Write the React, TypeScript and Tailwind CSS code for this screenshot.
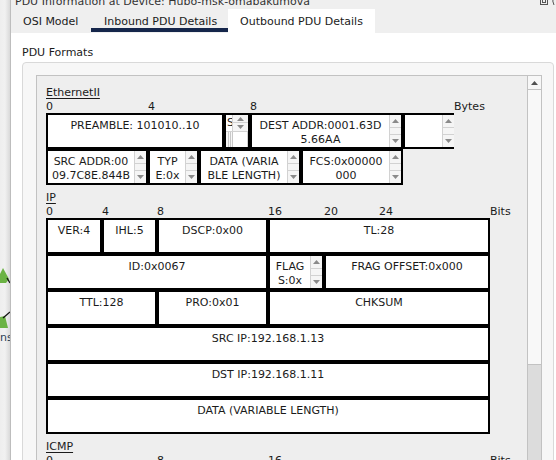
import React from "react";
import clsx from "clsx";

const Up = ({ fill = "#8a8a8a" }: { fill?: string }) => (
  <svg width="7" height="4" viewBox="0 0 7 4">
    <polygon points="0,4 3.5,0 7,4" fill={fill} />
  </svg>
);

const Down = ({ fill = "#8a8a8a" }: { fill?: string }) => (
  <svg width="7" height="4" viewBox="0 0 7 4">
    <polygon points="0,0 7,0 3.5,4" fill={fill} />
  </svg>
);

const Spin = () => (
  <div className="w-[12px] shrink-0 flex flex-col border-l border-[#d2d2d2] bg-[#f5f5f5]">
    <div className="h-[13px] flex items-center justify-center border-b border-[#d2d2d2]">
      <Up />
    </div>
    <div className="flex-1" />
    <div className="h-[13px] flex items-center justify-center border-t border-[#d2d2d2]">
      <Down />
    </div>
  </div>
);

interface FieldProps {
  w: string;
  lines?: string[];
  spin?: boolean;
  noRight?: boolean;
}

const Field = ({ w, lines = [], spin = false, noRight = false }: FieldProps) => (
  <div
    className={clsx(
      "h-[36px] shrink-0 border-2 border-black bg-white flex overflow-hidden",
      w,
      noRight && "border-r-0",
    )}
  >
    <div className="flex-1 min-w-0 pt-[4px] text-center leading-[14px] whitespace-pre overflow-hidden">
      {lines.map((l) => (
        <div key={l}>{l}</div>
      ))}
    </div>
    {spin && <Spin />}
  </div>
);

// tiny SFD cell with both scrollbars squeezed in
const TinyField = () => (
  <div className="w-[26px] h-[36px] shrink-0 border-2 border-black bg-white flex flex-col overflow-hidden">
    <div className="h-[16px] flex">
      <div className="w-[6px] overflow-hidden pl-[1px] pt-[1px] leading-[14px]">S</div>
      <div className="flex-1 flex flex-col border-l border-[#d2d2d2] bg-[#f5f5f5]">
        <div className="h-[8px] flex items-center justify-center border-b border-[#d2d2d2]">
          <Up />
        </div>
        <div className="flex-1 flex items-center justify-center">
          <Down />
        </div>
      </div>
    </div>
    <div className="flex-1 flex border-t border-[#d2d2d2] bg-[#f7f7f7]">
      <div className="w-[3px] border-r border-[#c8c8c8]" />
      <div className="w-[2px] border-r border-[#c8c8c8]" />
      <div className="w-[2px] border-r border-[#c8c8c8]" />
      <div className="flex-1 bg-white border-r border-[#d2d2d2]" />
    </div>
  </div>
);

const Header = ({ text }: { text: string }) => (
  <div className="h-[16px] leading-[16px]">
    <span className="underline underline-offset-[2px]">{text}</span>
  </div>
);

const LeftStrip = () => (
  <div className="w-[10px] shrink-0 h-full overflow-hidden flex flex-col bg-gradient-to-r from-[#eeeeee] via-[#f1f1f1] to-[#d9d9d9]">
    <div className="h-[266px] shrink-0" />
    <svg width="10" height="66" viewBox="0 0 10 66" className="shrink-0">
      <polygon points="3,2 9,13 6,17 0,17 0,8" fill="#6bb344" />
      <line x1="7" y1="12" x2="10" y2="17" stroke="#111" strokeWidth="1.3" />
      <polygon points="0,51 5,50 8,62 0,62" fill="#6bb344" />
      <line x1="3" y1="52" x2="10" y2="46" stroke="#111" strokeWidth="1.3" />
    </svg>
    <div className="leading-[12px] text-[#2b3f55] whitespace-nowrap">ns</div>
  </div>
);

export default function App() {
  return (
    <div className="w-[556px] h-[460px] overflow-hidden flex bg-white font-['DejaVu_Sans',sans-serif] text-[11px] text-[#1b1b1b]">
      <LeftStrip />
      <div className="flex-1 min-w-0 h-full flex flex-col border-l border-[#bdbdbd] overflow-hidden">
        {/* title bar, cut off at the top of the shot */}
        <div className="h-[9px] shrink-0 bg-[#efefef] flex overflow-hidden">
          <div className="-mt-[5px] pl-[4px] leading-[13px] text-[#333] whitespace-nowrap">
            PDU Information at Device: Hubo-msk-omabakumova
          </div>
          <svg width="17" height="9" viewBox="0 0 17 9" className="ml-auto -mt-[3px]">
            <rect x="1.5" y="0.5" width="7" height="7" fill="none" stroke="#555" />
            <rect x="3.5" y="2.5" width="3" height="3" fill="none" stroke="#555" />
            <path d="M15 0 Q12.5 4 15 8" fill="none" stroke="#555" />
          </svg>
        </div>

        {/* tabs */}
        <div className="h-[24px] shrink-0 flex bg-[#efefef]">
          <div className="w-[80px] pl-[12px] pt-[6px] leading-[13px]">OSI Model</div>
          <div className="w-[137px] flex flex-col">
            <div className="pl-[13px] pt-[6px] leading-[13px]">Inbound PDU Details</div>
            <div className="mt-auto mb-[1px] h-[4px] bg-[#15264b]" />
          </div>
          <div className="w-[147px] pl-[12px] pt-[6px] leading-[13px] bg-white">Outbound PDU Details</div>
        </div>

        {/* body */}
        <div className="flex-1 min-h-0 bg-white pt-[13px] overflow-hidden">
          <div className="pl-[11px] leading-[13px]">PDU Formats</div>
          <div className="mt-[3px] ml-[11px] mr-[2px] h-[420px] flex flex-col border border-[#d9d9d9] rounded-[4px] bg-[#f7f7f7] pt-[12px] pl-[13px] pr-[11px]">
            <div className="flex-1 min-h-0 flex border border-[#c2c2c2] bg-[#eeeeee]">
              <div className="flex-1 min-w-0 pl-[9px] pt-[9px] overflow-hidden">
                {/* Ethernet II */}
                <Header text="EthernetII" />
                <div className="h-[12px] leading-[12px] flex">
                  <span className="w-[102px]">0</span>
                  <span className="w-[102px]">4</span>
                  <span className="w-[204px]">8</span>
                  <span>Bytes</span>
                </div>
                <div className="flex">
                  <Field w="w-[178px]" lines={["PREAMBLE: 101010..10"]} />
                  <TinyField />
                  <Field w="w-[153px]" lines={["DEST ADDR:0001.63D", "5.66AA"]} spin />
                  <Field w="w-[51px]" spin noRight />
                </div>
                <div className="flex">
                  <Field w="w-[102px]" lines={["SRC ADDR:00", "09.7C8E.844B"]} spin />
                  <Field w="w-[51px]" lines={["TYP", "E:0x"]} spin />
                  <Field w="w-[102px]" lines={["DATA (VARIA", "BLE LENGTH)"]} spin />
                  <Field w="w-[102px]" lines={["FCS:0x00000", "000"]} spin />
                </div>

                {/* IP */}
                <div className="mt-[5px]">
                  <Header text="IP" />
                </div>
                <div className="h-[12px] leading-[12px] flex">
                  <span className="w-[56px]">0</span>
                  <span className="w-[55px]">4</span>
                  <span className="w-[111px]">8</span>
                  <span className="w-[56px]">16</span>
                  <span className="w-[55px]">20</span>
                  <span className="w-[111px]">24</span>
                  <span>Bits</span>
                </div>
                <div className="flex">
                  <Field w="w-[56px]" lines={["VER:4"]} />
                  <Field w="w-[55px]" lines={["IHL:5"]} />
                  <Field w="w-[111px]" lines={["DSCP:0x00"]} />
                  <Field w="w-[222px]" lines={["TL:28"]} />
                </div>
                <div className="flex">
                  <Field w="w-[222px]" lines={["ID:0x0067"]} />
                  <Field w="w-[56px]" lines={["FLAG", "S:0x"]} spin />
                  <Field w="w-[166px]" lines={["FRAG OFFSET:0x000"]} />
                </div>
                <div className="flex">
                  <Field w="w-[111px]" lines={["TTL:128"]} />
                  <Field w="w-[111px]" lines={["PRO:0x01"]} />
                  <Field w="w-[222px]" lines={["CHKSUM"]} />
                </div>
                <Field w="w-[444px]" lines={["SRC IP:192.168.1.13"]} />
                <Field w="w-[444px]" lines={["DST IP:192.168.1.11"]} />
                <Field w="w-[444px]" lines={["DATA (VARIABLE LENGTH)"]} />

                {/* ICMP */}
                <div className="mt-[5px]">
                  <Header text="ICMP" />
                </div>
                <div className="h-[12px] leading-[12px] flex">
                  <span className="w-[111px]">0</span>
                  <span className="w-[111px]">8</span>
                  <span className="w-[222px]">16</span>
                  <span>Bits</span>
                </div>
              </div>

              {/* scrollbar */}
              <div className="w-[14px] shrink-0 flex flex-col border-l border-[#c2c2c2] bg-[#dcdcdc]">
                <div className="h-[14px] shrink-0 flex items-center justify-center border-b border-[#c2c2c2] bg-[#f7f7f7]">
                  <Up fill="#505050" />
                </div>
                <div className="h-[275px] shrink-0 bg-[#f8f8f8] border-b border-[#c2c2c2]" />
              </div>
            </div>
          </div>
        </div>
      </div>
    </div>
  );
}
